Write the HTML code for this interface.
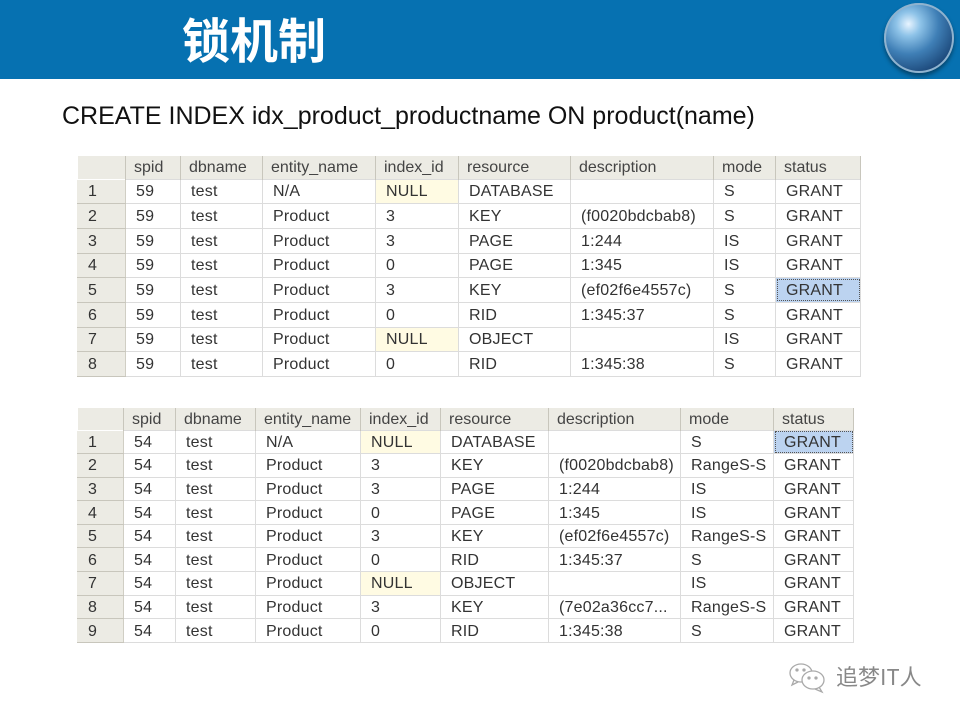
<!DOCTYPE html>
<html><head><meta charset="utf-8"><style>
body{margin:0;width:960px;height:720px;background:#fff;position:relative;overflow:hidden;font-family:"Liberation Sans","Noto Sans CJK SC",sans-serif}
.hdr{position:absolute;left:0;top:0;width:960px;height:79px;background:#0671b1}
.title{position:absolute;left:182px;top:6px;color:#fff;font-size:48px;font-weight:bold;font-family:"Noto Sans CJK SC",sans-serif;line-height:62px}
.globe{position:absolute;left:884px;top:3px;width:70px;height:70px;border-radius:50%;background:radial-gradient(circle at 35% 30%,#e8f4ff 0%,#8ec3e8 18%,#3f7fb6 45%,#1d4a7c 75%,#0d2a4a 100%);box-shadow:0 0 0 2px #8fb3cf inset,0 3px 4px rgba(0,0,0,.4)}
.sql{position:absolute;left:62px;top:102px;font-size:25px;color:#111}
table{position:absolute;border-collapse:collapse;table-layout:fixed;font-size:16px;letter-spacing:0.2px;color:#333;background:#fff}
td{border:1px solid #dcdcdc;padding:2px 0 0 10px;white-space:nowrap;overflow:hidden}
tr.h td{background:#ecebe4;border:none;border-right:1px solid #c8c6bc;color:#444;padding-left:8px;letter-spacing:0}
td.n{background:#ecebe4;border-color:#fff #d0cec4 #c8c6bc #ecebe4;padding-left:10px}
td.y{background:#fffbe3}
td.s{background:#bcd3f0;outline:1px dotted #555;outline-offset:-2px}
.wm{position:absolute;font-size:22px;color:#888;font-family:"Noto Sans CJK SC",sans-serif}
</style></head><body>
<div class="hdr"></div>
<div class="title">锁机制</div>
<div class="globe"></div>
<div class="sql">CREATE INDEX idx_product_productname ON product(name)</div>

<table style="left:77px;top:156px;width:783px">
<colgroup><col style="width:48px"><col style="width:55px"><col style="width:82px"><col style="width:113px"><col style="width:83px"><col style="width:112px"><col style="width:143px"><col style="width:62px"><col style="width:85px"></colgroup>
<tr class="h" style="height:23px"><td></td><td>spid</td><td>dbname</td><td>entity_name</td><td>index_id</td><td>resource</td><td>description</td><td>mode</td><td>status</td></tr>
<tr style="height:24.7px"><td class="n">1</td><td>59</td><td>test</td><td>N/A</td><td class="y">NULL</td><td>DATABASE</td><td></td><td>S</td><td>GRANT</td></tr>
<tr style="height:24.7px"><td class="n">2</td><td>59</td><td>test</td><td>Product</td><td>3</td><td>KEY</td><td>(f0020bdcbab8)</td><td>S</td><td>GRANT</td></tr>
<tr style="height:24.7px"><td class="n">3</td><td>59</td><td>test</td><td>Product</td><td>3</td><td>PAGE</td><td>1:244</td><td>IS</td><td>GRANT</td></tr>
<tr style="height:24.7px"><td class="n">4</td><td>59</td><td>test</td><td>Product</td><td>0</td><td>PAGE</td><td>1:345</td><td>IS</td><td>GRANT</td></tr>
<tr style="height:24.7px"><td class="n">5</td><td>59</td><td>test</td><td>Product</td><td>3</td><td>KEY</td><td>(ef02f6e4557c)</td><td>S</td><td class="s">GRANT</td></tr>
<tr style="height:24.7px"><td class="n">6</td><td>59</td><td>test</td><td>Product</td><td>0</td><td>RID</td><td>1:345:37</td><td>S</td><td>GRANT</td></tr>
<tr style="height:24.7px"><td class="n">7</td><td>59</td><td>test</td><td>Product</td><td class="y">NULL</td><td>OBJECT</td><td></td><td>IS</td><td>GRANT</td></tr>
<tr style="height:24.7px"><td class="n">8</td><td>59</td><td>test</td><td>Product</td><td>0</td><td>RID</td><td>1:345:38</td><td>S</td><td>GRANT</td></tr>
</table>

<table style="left:77px;top:408px;width:776px">
<colgroup><col style="width:46px"><col style="width:52px"><col style="width:80px"><col style="width:105px"><col style="width:80px"><col style="width:108px"><col style="width:132px"><col style="width:93px"><col style="width:80px"></colgroup>
<tr class="h" style="height:22px"><td></td><td>spid</td><td>dbname</td><td>entity_name</td><td>index_id</td><td>resource</td><td>description</td><td>mode</td><td>status</td></tr>
<tr style="height:23.6px"><td class="n">1</td><td>54</td><td>test</td><td>N/A</td><td class="y">NULL</td><td>DATABASE</td><td></td><td>S</td><td class="s">GRANT</td></tr>
<tr style="height:23.6px"><td class="n">2</td><td>54</td><td>test</td><td>Product</td><td>3</td><td>KEY</td><td>(f0020bdcbab8)</td><td>RangeS-S</td><td>GRANT</td></tr>
<tr style="height:23.6px"><td class="n">3</td><td>54</td><td>test</td><td>Product</td><td>3</td><td>PAGE</td><td>1:244</td><td>IS</td><td>GRANT</td></tr>
<tr style="height:23.6px"><td class="n">4</td><td>54</td><td>test</td><td>Product</td><td>0</td><td>PAGE</td><td>1:345</td><td>IS</td><td>GRANT</td></tr>
<tr style="height:23.6px"><td class="n">5</td><td>54</td><td>test</td><td>Product</td><td>3</td><td>KEY</td><td>(ef02f6e4557c)</td><td>RangeS-S</td><td>GRANT</td></tr>
<tr style="height:23.6px"><td class="n">6</td><td>54</td><td>test</td><td>Product</td><td>0</td><td>RID</td><td>1:345:37</td><td>S</td><td>GRANT</td></tr>
<tr style="height:23.6px"><td class="n">7</td><td>54</td><td>test</td><td>Product</td><td class="y">NULL</td><td>OBJECT</td><td></td><td>IS</td><td>GRANT</td></tr>
<tr style="height:23.6px"><td class="n">8</td><td>54</td><td>test</td><td>Product</td><td>3</td><td>KEY</td><td>(7e02a36cc7...</td><td>RangeS-S</td><td>GRANT</td></tr>
<tr style="height:23.6px"><td class="n">9</td><td>54</td><td>test</td><td>Product</td><td>0</td><td>RID</td><td>1:345:38</td><td>S</td><td>GRANT</td></tr>
</table>

<svg style="position:absolute;left:788px;top:662px" width="40" height="32" viewBox="0 0 40 32" fill="none" stroke="#aaa" stroke-width="1.3">
<ellipse cx="13" cy="11" rx="11" ry="9"/><path d="M6 18l-2 5 6-3"/>
<ellipse cx="25" cy="18" rx="11" ry="9" fill="#fff"/><path d="M31 25l3 5-7-3"/>
<circle cx="9" cy="8" r="1" fill="#aaa"/><circle cx="16" cy="8" r="1" fill="#aaa"/><circle cx="21" cy="16" r="1" fill="#aaa"/><circle cx="28" cy="16" r="1" fill="#aaa"/>
</svg>
<div class="wm" style="left:836px;top:660px">追梦IT人</div>
</body></html>
